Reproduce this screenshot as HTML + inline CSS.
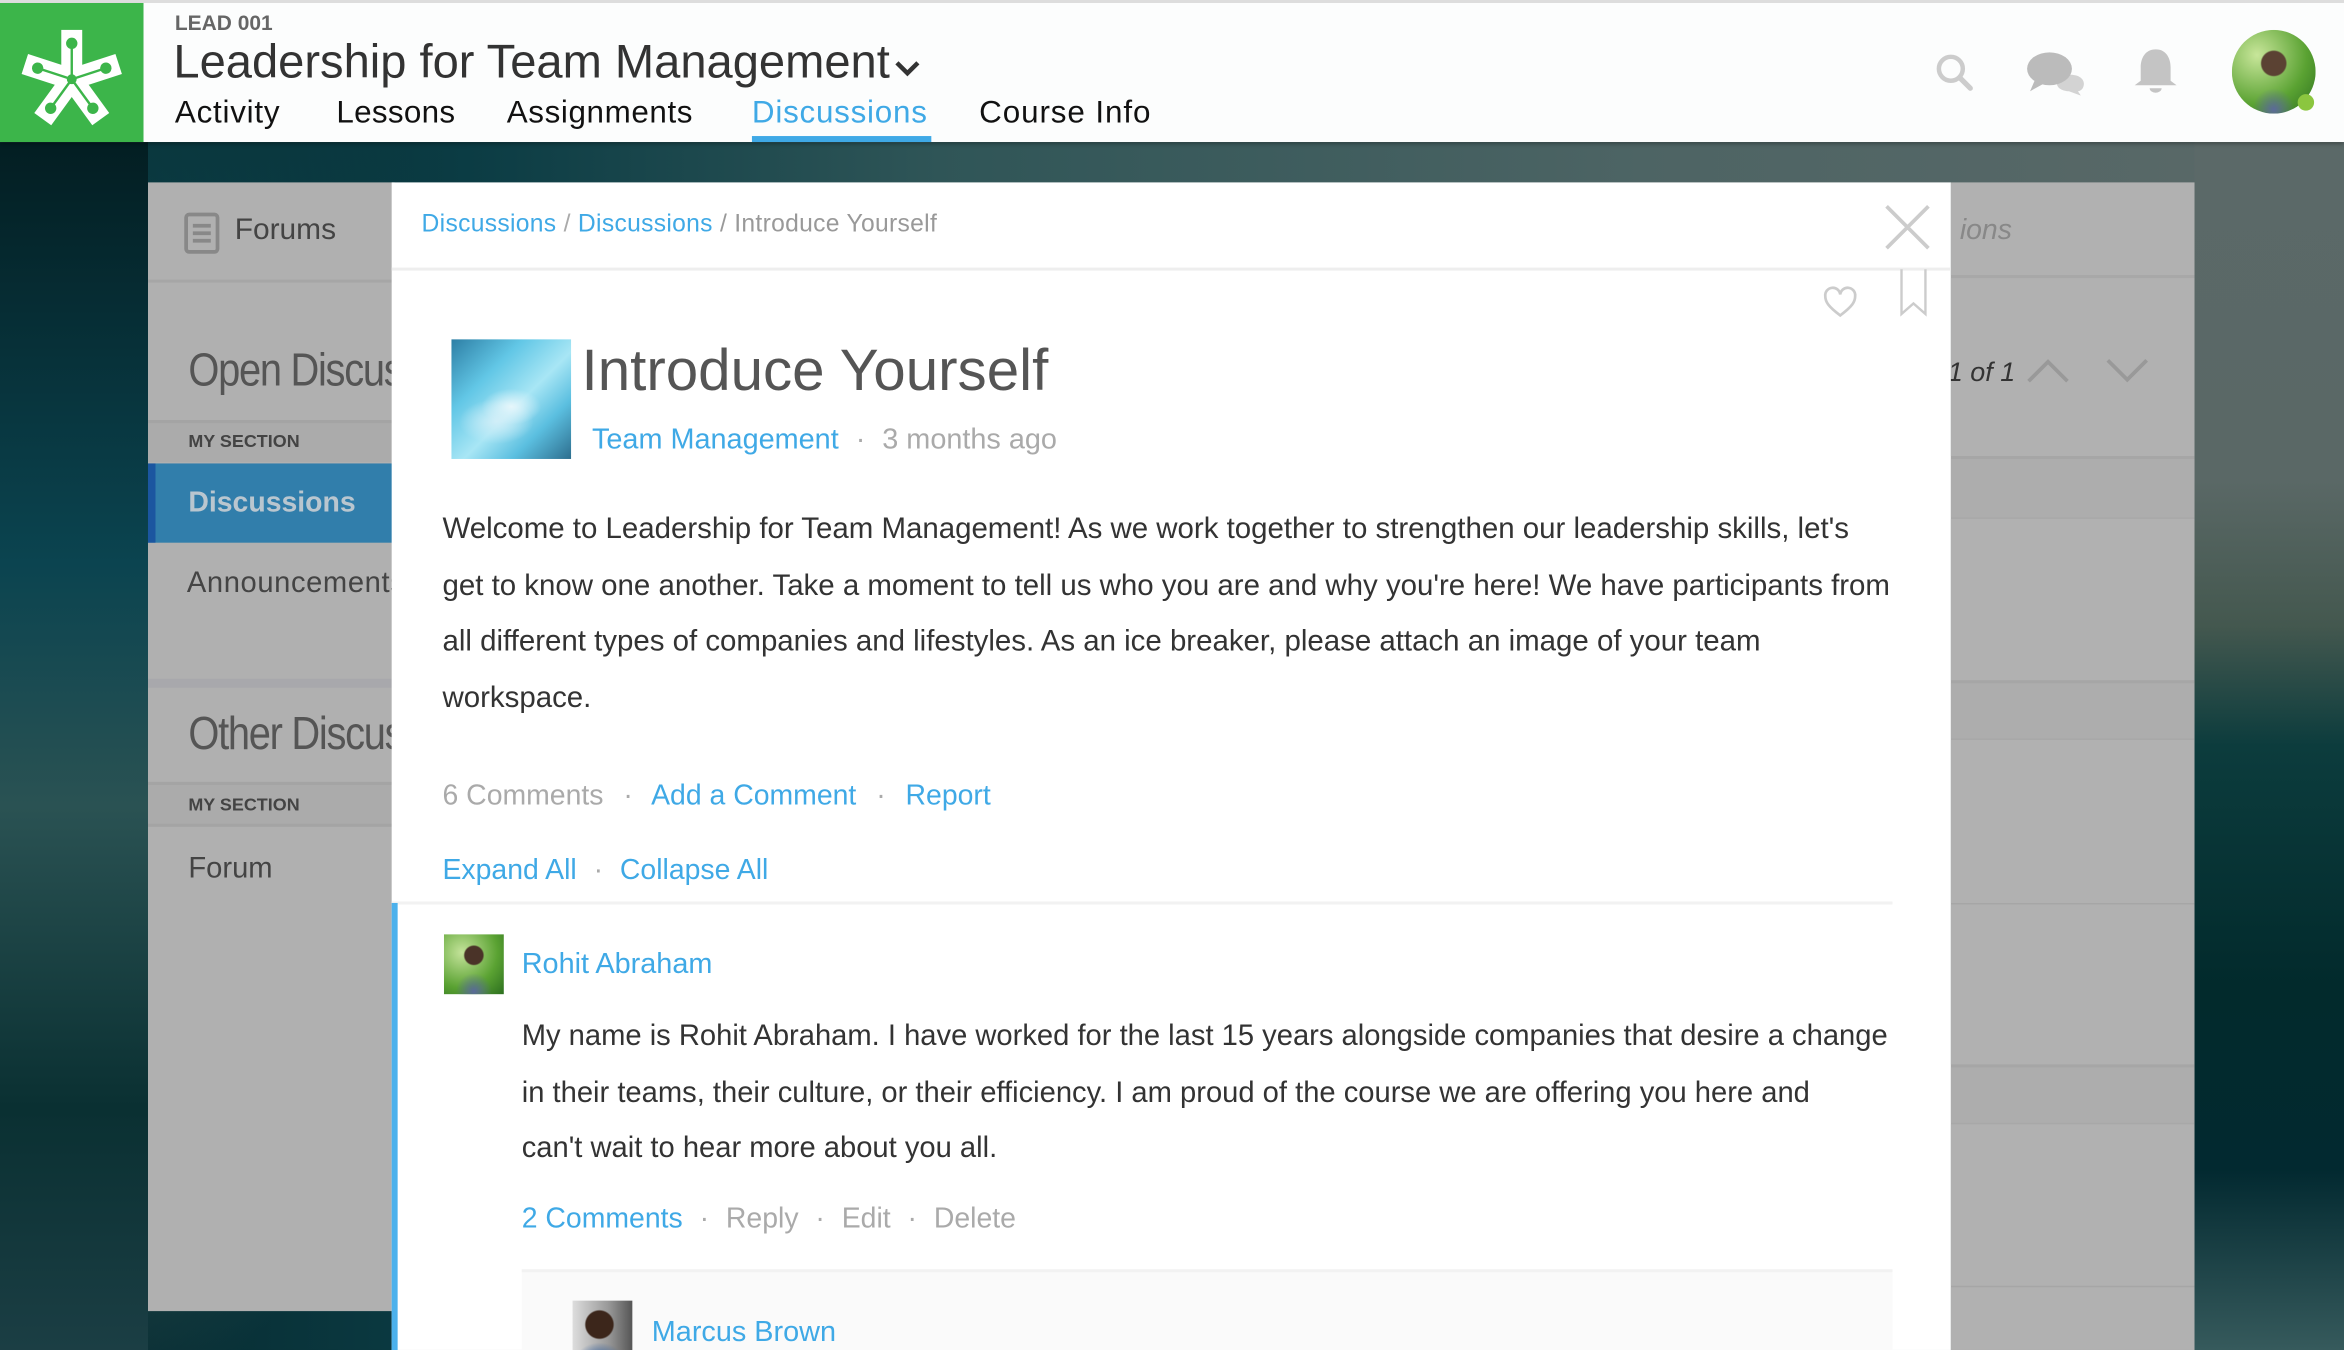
<!DOCTYPE html>
<html><head><meta charset="utf-8"><style>
*{margin:0;padding:0;box-sizing:border-box}
html,body{width:2344px;height:1350px;overflow:hidden;background:#0b2f36}
#w{position:absolute;left:0;top:0;width:1568px;height:903px;transform:scale(1.4949,1.495);transform-origin:0 0;font-family:"Liberation Sans",sans-serif;overflow:hidden}
.a{position:absolute;white-space:nowrap}
.bl{color:#3fa9e6}.gr{color:#aaa}
</style></head><body><div id="w">
<!-- background -->
<div class="a" style="left:0;top:95px;width:1568px;height:808px;background:radial-gradient(ellipse 300px 500px at 30px 300px,#0e4a52,transparent),radial-gradient(ellipse 200px 300px at 60px 550px,#36595a,transparent),linear-gradient(90deg,#06262b 0%,#0b3c44 20%,#2f5557 40%,#4d6464 70%,#5b6968 100%)"></div>
<div class="a" style="left:1468px;top:95px;width:100px;height:808px;background:linear-gradient(180deg,#5b6968 0%,#5a6866 28%,#44584f 40%,#0c3c3d 50%,#022a2c 70%,#022930 85%,#365a5c 100%)"></div>
<div class="a" style="left:0;top:95px;width:99px;height:808px;background:linear-gradient(180deg,#031e22 0%,#0b4450 35%,#2a5253 55%,#0a3032 80%,#1b3e44 100%)"></div>
<!-- header -->
<div class="a" style="left:0;top:0;width:1568px;height:95px;background:#fcfdfd;border-top:2px solid #ddd;box-shadow:0 1px 3px rgba(0,0,0,.4)"></div>
<div class="a" style="left:0;top:2px;width:96px;height:93px;background:#3cb54a">
<svg width="96" height="93" viewBox="0 0 96 93"><g transform="translate(48,51)">
<g fill="#fff"><rect x="-7" y="-33" width="14" height="33"/><rect x="-7" y="-33" width="14" height="33" transform="rotate(72)"/><rect x="-7" y="-33" width="14" height="33" transform="rotate(144)"/><rect x="-7" y="-33" width="14" height="33" transform="rotate(216)"/><rect x="-7" y="-33" width="14" height="33" transform="rotate(288)"/><circle r="10"/></g>
<g stroke="#3cb54a" stroke-width="1.6" fill="#3cb54a"><line x1="0" y1="0" x2="0" y2="-24"/><circle cy="-24" r="3"/><g transform="rotate(72)"><line x1="0" y1="0" x2="0" y2="-24"/><circle cy="-24" r="3"/></g><g transform="rotate(144)"><line x1="0" y1="0" x2="0" y2="-24"/><circle cy="-24" r="3"/></g><g transform="rotate(216)"><line x1="0" y1="0" x2="0" y2="-24"/><circle cy="-24" r="3"/></g><g transform="rotate(288)"><line x1="0" y1="0" x2="0" y2="-24"/><circle cy="-24" r="3"/></g><circle r="2.5"/></g>
</g></svg></div>
<div class="a" style="left:117px;top:7px;font-size:14px;font-weight:bold;color:#666">LEAD 001</div>
<div class="a" style="left:116px;top:23px;font-size:31.5px;color:#333">Leadership for Team Management<svg width="20" height="14" viewBox="0 0 20 14" style="margin-left:2px"><path d="M3 4l7 7 7-7" stroke="#333" stroke-width="3" fill="none"/></svg></div>
<div class="a" style="left:117px;top:64px;font-size:21px;letter-spacing:.5px;color:#111">Activity</div>
<div class="a" style="left:225px;top:64px;font-size:21px;letter-spacing:.2px;color:#111">Lessons</div>
<div class="a" style="left:339px;top:64px;font-size:21px;letter-spacing:.4px;color:#111">Assignments</div>
<div class="a" style="left:503px;top:64px;font-size:21px;letter-spacing:.5px;color:#3fa9e6">Discussions</div>
<div class="a" style="left:503px;top:91px;width:120px;height:4px;background:#3fa9e6"></div>
<div class="a" style="left:655px;top:64px;font-size:21px;letter-spacing:.6px;color:#111">Course Info</div>
<svg class="a" style="left:1293px;top:34px" width="28" height="28" viewBox="0 0 28 28"><circle cx="12" cy="12" r="8" stroke="#ccc" stroke-width="3" fill="none"/><path d="M18 18l7 7" stroke="#ccc" stroke-width="3.5" stroke-linecap="round"/></svg>
<svg class="a" style="left:1355px;top:32px" width="42" height="32" viewBox="0 0 42 32"><path d="M30 18c6 0 9 3 9 6s-2 5-4 5l2 3-8-3c-4 0-8-2-8-5" fill="#d3d3d3"/><ellipse cx="16" cy="14" rx="15" ry="11" fill="#bbb"/><path d="M6 22l-3 7 9-5z" fill="#bbb"/></svg>
<svg class="a" style="left:1426px;top:31px" width="32" height="32" viewBox="0 0 32 32"><path d="M16 2c-7 0-10 6-10 12v9l-4 3h28l-4-3v-9c0-6-3-12-10-12z" fill="#c4c4c4"/><path d="M12 28a4 3 0 0 0 8 0z" fill="#c4c4c4"/></svg>
<div class="a" style="left:1493px;top:20px;width:56px;height:56px;border-radius:50%;background:radial-gradient(circle at 50% 40%,#5b4233 0 8px,transparent 9px),radial-gradient(ellipse 14px 14px at 50% 95%,#5c6a9a,transparent),radial-gradient(circle at 30% 30%,#c8e69a,#5aa232 60%,#2c6f1f)"></div>
<div class="a" style="left:1537px;top:63px;width:11px;height:11px;border-radius:50%;background:#8bc63f"></div>
<!-- left panel -->
<div class="a" style="left:99px;top:122px;width:165px;height:755px;background:#b0b0b0;overflow:hidden">
<div class="a" style="left:0;top:65px;width:165px;height:2px;background:#a6a6a6"></div>
<svg class="a" style="left:24px;top:20px" width="24" height="28" viewBox="0 0 24 28"><rect x="1.5" y="1.5" width="21" height="25" rx="2" fill="none" stroke="#888" stroke-width="2.5"/><path d="M6 9h12M6 14h12M6 19h12" stroke="#888" stroke-width="2.5"/></svg>
<div class="a" style="left:58px;top:21px;font-size:20px;color:#444">Forums</div>
<div class="a" style="left:27px;top:108px;font-size:31px;color:#555;letter-spacing:-1px;transform:scaleX(.86);transform-origin:0 0">Open Discussions</div>
<div class="a" style="left:0;top:159px;width:165px;height:28px;background:#ababab;border-top:2px solid #a4a4a4"></div>
<div class="a" style="left:27px;top:166px;font-size:12px;font-weight:bold;color:#444">MY SECTION</div>
<div class="a" style="left:0;top:188px;width:165px;height:53px;background:#317eab;border-left:5px solid #1b56a0"></div>
<div class="a" style="left:27px;top:204px;font-size:19px;font-weight:bold;color:#b9c6cf">Discussions</div>
<div class="a" style="left:26px;top:257px;font-size:19.5px;letter-spacing:.4px;color:#444">Announcements</div>
<div class="a" style="left:0;top:332px;width:165px;height:6px;background:#a8a8ac"></div>
<div class="a" style="left:27px;top:351px;font-size:31px;color:#555;letter-spacing:-1px;transform:scaleX(.86);transform-origin:0 0">Other Discussions</div>
<div class="a" style="left:0;top:401px;width:165px;height:30px;background:#ababab;border-top:2px solid #a4a4a4;border-bottom:2px solid #a4a4a4"></div>
<div class="a" style="left:27px;top:409px;font-size:12px;font-weight:bold;color:#444">MY SECTION</div>
<div class="a" style="left:27px;top:448px;font-size:19.5px;color:#444">Forum</div>
</div>
<!-- right panel -->
<div class="a" style="left:1305px;top:122px;width:163px;height:781px;background:#b1b1b1">
<div class="a" style="left:6px;top:22px;font-size:19px;font-style:italic;color:#888">ions</div>
<div class="a" style="left:0;top:62px;width:163px;height:2px;background:#a8a8a8"></div>
<div class="a" style="left:0;top:183px;width:163px;height:42px;background:#adadad;border-top:2px solid #a6a6a6;border-bottom:1px solid #a8a8a8"></div>
<div class="a" style="left:0;top:333px;width:163px;height:40px;background:#adadad;border-top:2px solid #a6a6a6;border-bottom:1px solid #a8a8a8"></div>
<div class="a" style="left:0;top:482px;width:163px;height:1px;background:#a6a6a6"></div>
<div class="a" style="left:0;top:590px;width:163px;height:40px;background:#adadad;border-top:2px solid #a6a6a6;border-bottom:1px solid #a8a8a8"></div>
<div class="a" style="left:0;top:738px;width:163px;height:1px;background:#a6a6a6"></div>
<div class="a" style="left:-2px;top:117px;font-size:18px;font-style:italic;color:#333">1 of 1</div>
<svg class="a" style="left:50px;top:116px" width="30" height="20" viewBox="0 0 30 20"><path d="M2 17L15 4l13 13" stroke="#999" stroke-width="2.5" fill="none"/></svg>
<svg class="a" style="left:103px;top:116px" width="30" height="20" viewBox="0 0 30 20"><path d="M2 3l13 13 13-13" stroke="#999" stroke-width="2.5" fill="none"/></svg>
</div>
<!-- modal -->
<div class="a" style="left:262px;top:122px;width:1043px;height:781px;background:#fff">
<div class="a" style="left:20px;top:19px;font-size:16.5px;letter-spacing:.2px;color:#3fa9e6">Discussions <span class="gr">/</span> Discussions <span style="color:#999">/ Introduce Yourself</span></div>
<div class="a" style="left:0;top:57px;width:1043px;height:2px;background:#eee"></div>
<svg class="a" style="left:998px;top:14px" width="32" height="32" viewBox="0 0 32 32"><path d="M2 2l28 28M30 2L2 30" stroke="#ccc" stroke-width="2.5"/></svg>
<svg class="a" style="left:957px;top:69px" width="24" height="22" viewBox="0 0 24 22"><path d="M12 20C4 14 2 11 2 7a5 5 0 0 1 10-1 5 5 0 0 1 10 1c0 4-2 7-10 13z" stroke="#ccc" stroke-width="1.8" fill="none"/></svg>
<svg class="a" style="left:1008px;top:58px" width="20" height="32" viewBox="0 0 20 32"><path d="M2 0v30l8-7 8 7V0" stroke="#ccc" stroke-width="1.6" fill="none"/></svg>
<div class="a" style="left:40px;top:105px;width:80px;height:80px;background:radial-gradient(ellipse 20px 12px at 40px 45px,#e6f6fb,transparent),radial-gradient(ellipse 25px 15px at 30px 55px,#d0eef8,transparent),linear-gradient(135deg,#2d7fa5 0%,#62c7e6 30%,#a8e6f5 55%,#5bbfe0 75%,#2d6e8e 100%)"></div>
<div class="a" style="left:127px;top:105px;font-size:39px;color:#555;font-weight:300">Introduce Yourself</div>
<div class="a" style="left:134px;top:162px;font-size:19.3px;color:#3fa9e6">Team Management <span class="gr" style="margin:0 6px">·</span> <span class="gr">3 months ago</span></div>
<div class="a" style="left:34px;top:214px;font-size:19.7px;line-height:37.5px;color:#333">Welcome to Leadership for Team Management! As we work together to strengthen our leadership skills, let's<br>get to know one another. Take a moment to tell us who you are and why you're here! We have participants from<br>all different types of companies and lifestyles. As an ice breaker, please attach an image of your team<br>workspace.</div>
<div class="a" style="left:34px;top:400px;font-size:19px;color:#aaa">6 Comments <span style="margin:0 8px">·</span> <span class="bl">Add a Comment</span> <span style="margin:0 8px">·</span> <span class="bl">Report</span></div>
<div class="a" style="left:34px;top:450px;font-size:19px;color:#3fa9e6">Expand All <span class="gr" style="margin:0 6px">·</span> Collapse All</div>
<div class="a" style="left:0;top:481px;width:1004px;height:2px;background:#f2f2f2"></div>
<div class="a" style="left:0;top:482px;width:4px;height:300px;background:#4cb1ec"></div>
<div class="a" style="left:35px;top:503px;width:40px;height:40px;background:radial-gradient(circle at 50% 35%,#4a3328 0 6px,transparent 7px),radial-gradient(ellipse 12px 12px at 50% 95%,#5a6a9a,transparent),radial-gradient(circle at 30% 30%,#c4e39a,#5aa232 60%,#2c6f1f)"></div>
<div class="a" style="left:87px;top:513px;font-size:19.3px;color:#3fa9e6">Rohit Abraham</div>
<div class="a" style="left:87px;top:553px;font-size:19.5px;line-height:37.5px;color:#333">My name is Rohit Abraham. I have worked for the last 15 years alongside companies that desire a change<br>in their teams, their culture, or their efficiency. I am proud of the course we are offering you here and<br>can't wait to hear more about you all.</div>
<div class="a" style="left:87px;top:683px;font-size:19px;color:#aaa"><span class="bl">2 Comments</span> <span style="margin:0 6px">·</span> Reply <span style="margin:0 6px">·</span> Edit <span style="margin:0 6px">·</span> Delete</div>
<div class="a" style="left:87px;top:727px;width:917px;height:60px;background:#fafafa;border-top:2px solid #f2f2f2"></div>
<div class="a" style="left:121px;top:748px;width:40px;height:40px;background:radial-gradient(circle at 45% 40%,#3c261b 0 9px,transparent 10px),radial-gradient(ellipse 16px 12px at 45% 100%,#2c5a9a,transparent),linear-gradient(90deg,#ddd,#999 60%,#555)"></div>
<div class="a" style="left:174px;top:759px;font-size:19.3px;color:#3fa9e6">Marcus Brown</div>
</div>
</div></body></html>
